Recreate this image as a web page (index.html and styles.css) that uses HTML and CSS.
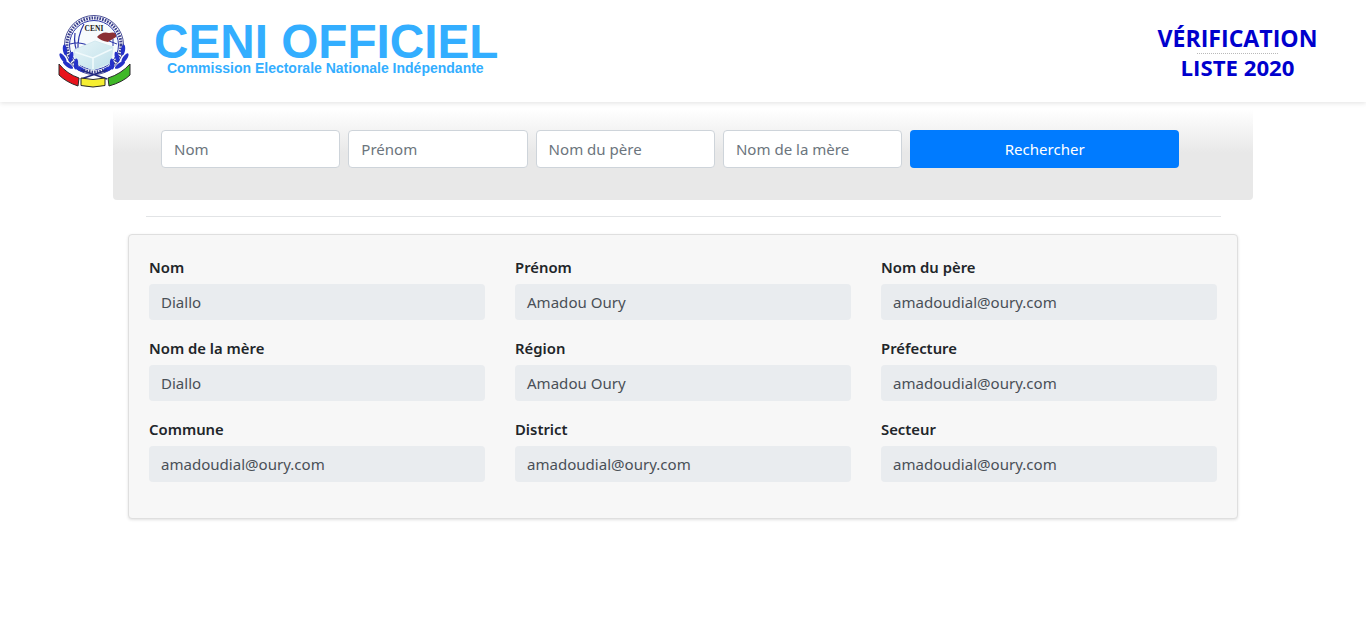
FILE: index.html
```html
<!DOCTYPE html>
<html lang="fr">
<head>
<meta charset="utf-8">
<title>CENI Officiel</title>
<link rel="stylesheet" href="styles.css">
</head>
<body>
<header class="topbar">
  <div class="brand">
    <svg class="logo" width="74" height="76" viewBox="0 0 74 76" aria-hidden="true">
      <defs>
        <linearGradient id="box" x1="0" y1="0" x2="1" y2="1">
          <stop offset="0" stop-color="#e8f5f8"/>
          <stop offset="1" stop-color="#bfe0ea"/>
        </linearGradient>
      </defs>
      <circle cx="37" cy="31" r="29.5" fill="#fbfdfe" stroke="#4a4f96" stroke-width="1"/>
      <circle cx="37" cy="31" r="27" fill="none" stroke="#3b3f8e" stroke-width="3" stroke-dasharray="1.6 1.1"/>
      <circle cx="37" cy="31" r="24.5" fill="#f7fbfd" stroke="#2b35a6" stroke-width="1"/>
      <path d="M13 30 Q24 27 34 33 M18 19 Q16 32 23 44 M27 10 Q20 22 21 38" fill="none" stroke="#2a35a8" stroke-width="1.2"/>
      <path d="M17 36 L38 27 L56 33 L54 49 L36 56 L19 49 Z" fill="url(#box)" stroke="#d3e9f0"/>
      <path d="M18 38 L36 44 L55 35 M36 44 V55" fill="none" stroke="#f1fafc" stroke-width="1.6"/>
      <path d="M40 23 Q45 17 52 19 Q60 17 59 23 L51 28 Q44 27 40 23 Z" fill="#8a2f34"/>
      <path d="M52 27 L60 30 M56 25 V32" stroke="#2a35a8" stroke-width="1"/>
      <text class="logo-text" x="37" y="17" text-anchor="middle">CENI</text>
      <g fill="#2531c8">
        <ellipse cx="8" cy="36" rx="2.1" ry="5.5" transform="rotate(-8 8 36)"/>
        <ellipse cx="6" cy="44" rx="2.1" ry="5.5" transform="rotate(-35 6 44)"/>
        <ellipse cx="14" cy="43" rx="2.1" ry="5.5" transform="rotate(15 14 43)"/>
        <ellipse cx="11" cy="51" rx="2.1" ry="6" transform="rotate(-55 11 51)"/>
        <ellipse cx="19" cy="50" rx="2.1" ry="5.5" transform="rotate(5 19 50)"/>
        <ellipse cx="23" cy="55" rx="2.1" ry="6" transform="rotate(-65 23 55)"/>
        <ellipse cx="66" cy="36" rx="2.1" ry="5.5" transform="rotate(8 66 36)"/>
        <ellipse cx="68" cy="44" rx="2.1" ry="5.5" transform="rotate(35 68 44)"/>
        <ellipse cx="60" cy="43" rx="2.1" ry="5.5" transform="rotate(-15 60 43)"/>
        <ellipse cx="63" cy="51" rx="2.1" ry="6" transform="rotate(55 63 51)"/>
        <ellipse cx="55" cy="50" rx="2.1" ry="5.5" transform="rotate(-5 55 50)"/>
        <ellipse cx="51" cy="55" rx="2.1" ry="6" transform="rotate(65 51 55)"/>
      </g>
      <path d="M24 56 L50 65 M50 56 L24 65" stroke="#232a80" stroke-width="1.4"/>
      <path d="M2 50 L2 61 Q9 68 21 72 L22 64 Q10 60 2 50 Z" fill="#e8141c" stroke="#2a2a2a" stroke-width="1"/>
      <path d="M24 64 Q36 67 48 64 L48 71.5 Q36 74.5 24 71.5 Z" fill="#f6ee30" stroke="#2a2a2a" stroke-width="1"/>
      <path d="M73 50 L73 61 Q66 68 52 72 L51 64 Q64 60 73 50 Z" fill="#3fb828" stroke="#2a2a2a" stroke-width="1"/>
    </svg>
    <div class="wordmark">
      <h1 class="wordmark-title">CENI OFFICIEL</h1>
      <p class="wordmark-sub">Commission Electorale Nationale Indépendante</p>
    </div>
  </div>
  <div class="verif">
    <div>VÉRIFICATION</div>
    <div class="verif-line">LISTE 2020</div>
  </div>
</header>

<main class="page">
  <form class="search">
    <input class="search-input" type="text" placeholder="Nom">
    <input class="search-input" type="text" placeholder="Prénom">
    <input class="search-input" type="text" placeholder="Nom du père">
    <input class="search-input" type="text" placeholder="Nom de la mère">
    <button class="search-btn" type="button">Rechercher</button>
  </form>
  <hr class="rule">
  <section class="card">
    <div class="field"><label class="field-label">Nom</label><div class="field-value">Diallo</div></div>
    <div class="field"><label class="field-label">Prénom</label><div class="field-value">Amadou Oury</div></div>
    <div class="field"><label class="field-label">Nom du père</label><div class="field-value">amadoudial@oury.com</div></div>
    <div class="field"><label class="field-label">Nom de la mère</label><div class="field-value">Diallo</div></div>
    <div class="field"><label class="field-label">Région</label><div class="field-value">Amadou Oury</div></div>
    <div class="field"><label class="field-label">Préfecture</label><div class="field-value">amadoudial@oury.com</div></div>
    <div class="field"><label class="field-label">Commune</label><div class="field-value">amadoudial@oury.com</div></div>
    <div class="field"><label class="field-label">District</label><div class="field-value">amadoudial@oury.com</div></div>
    <div class="field"><label class="field-label">Secteur</label><div class="field-value">amadoudial@oury.com</div></div>
  </section>
</main>
</body>
</html>
```
FILE: styles.css
```css
* { box-sizing: border-box; }

html, body { height: 100%; }

body {
  margin: 0;
  background: #fff;
  color: #212529;
  font-family: "Noto Sans", "Open Sans", sans-serif;
  font-size: 15.05px;
  overflow: hidden;
}

.topbar {
  height: 102px;
  background: #fff;
  box-shadow: 0 1px 5px rgba(0, 0, 0, .12);
  display: flex;
  justify-content: space-between;
  align-items: flex-start;
  padding: 0 48px 0 57px;
}

.brand {
  display: flex;
  align-items: flex-start;
  padding-top: 14px;
}

.logo { flex: none; }
.logo-text { font: bold 7.5px "Liberation Serif", serif; fill: #222; }

.wordmark {
  margin-left: 23px;
  padding-top: 8px;
  font-family: "Liberation Sans", Arial, sans-serif;
  font-weight: bold;
  color: #33aeff;
}

.wordmark-title {
  margin: 0;
  font-size: 47.7px;
  line-height: 40px;
  font-weight: bold;
  white-space: nowrap;
}

.wordmark-sub {
  margin: 0 0 0 13px;
  font-size: 14px;
  line-height: 12px;
  white-space: nowrap;
}

.verif {
  width: 161px;
  padding-top: 23px;
  text-align: center;
  color: #0000cd;
  font-family: "Open Sans", "Noto Sans", sans-serif;
  font-size: 23.1px;
  font-weight: 700;
  line-height: 30px;
  white-space: nowrap;
}

.verif-line {
  width: 81px;
  margin: 0 auto;
  border-top: 1px dotted #b9b9b9;
  display: flex;
  justify-content: center;
  font-size: 22.2px;
  line-height: 28px;
}

.page {
  width: 1140px;
  margin: 7px auto 0 113px;
}

.search {
  height: 91px;
  padding: 21px 48px 0;
  display: flex;
  align-items: flex-start;
  gap: 8px;
  background: linear-gradient(to bottom, #fff 0%, #e8e8e8 48%, #e8e8e8 100%);
  border-radius: 0 0 4px 4px;
}

.search-input {
  width: 179.3px;
  height: 38px;
  padding: 6px 12px;
  border: 1px solid #ced4da;
  border-radius: 4px;
  background: #fff;
  color: #495057;
  font: inherit;
}

.search-input::placeholder { color: #6c757d; opacity: 1; }

.search-btn {
  width: 269px;
  height: 38px;
  border: 0;
  border-radius: 4px;
  background: #007bff;
  color: #fff;
  font: inherit;
}

.rule {
  width: 1075px;
  height: 1px;
  margin: 16px 0 17px 33px;
  border: 0;
  background: #e2e4e6;
}

.card {
  width: 1110px;
  height: 285px;
  margin-left: 15px;
  padding: 21px 20px 0;
  display: grid;
  grid-template-columns: repeat(3, 336px);
  grid-auto-rows: 81px;
  column-gap: 30px;
  background: #f7f7f7;
  border: 1px solid #dfdfdf;
  border-radius: 4px;
  box-shadow: 0 1px 3px rgba(0, 0, 0, .12);
}

.field-label {
  display: block;
  height: 28px;
  line-height: 22px;
  font-size: 14.85px;
  font-weight: 600;
}

.field-value {
  height: 36px;
  padding: 0 12px;
  line-height: 36px;
  border-radius: 4px;
  background: #e9ecef;
  color: #495057;
}
```
